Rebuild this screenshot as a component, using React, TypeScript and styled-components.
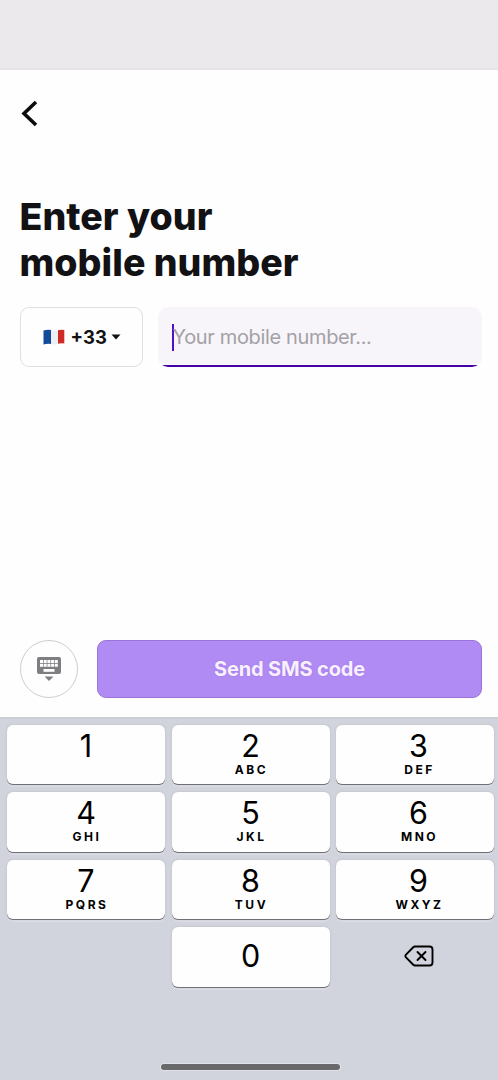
import React from "react";
import styled, { createGlobalStyle } from "styled-components";

const GlobalStyle = createGlobalStyle`
  *, *::before, *::after { box-sizing: border-box; }
  body { margin: 0; background: #fefefe; }
  button, input { font: inherit; color: inherit; margin: 0; padding: 0; }
`;

const Screen = styled.div`
  width: 498px;
  height: 1080px;
  display: flex;
  flex-direction: column;
  overflow: hidden;
  background: #fefefe;
  color: #121114;
  font-family: Inter, "Liberation Sans", sans-serif;
`;

const StatusBar = styled.header`
  flex: none;
  height: 70px;
  background: #ece9ed;
  border-bottom: 2px solid #e6e4e8;
`;

const Content = styled.main`
  flex: none;
  height: 647px;
  padding: 30px 16px 19px 19.5px;
  display: flex;
  flex-direction: column;
`;

const BackButton = styled.button`
  width: 24px;
  height: 28px;
  border: 0;
  background: none;
  svg { display: block; }
`;

const Title = styled.h1`
  margin: 66px 0 0;
  font-size: 37.5px;
  line-height: 46px;
  font-weight: 800;
  letter-spacing: 0.05px;
  white-space: nowrap;
`;

const Fields = styled.div`
  margin-top: 21px;
  display: flex;
  gap: 15px;
`;

const CountryPicker = styled.button`
  width: 123px;
  height: 60px;
  flex: none;
  display: flex;
  align-items: center;
  padding-left: 22px;
  border: 1px solid #e0dfe2;
  border-radius: 9px;
  background: #fefefe;
`;

const DialCode = styled.span`
  margin: 0 4px 0 6px;
  font-size: 18.5px;
  font-weight: 650;
`;

const PhoneField = styled.label`
  flex: 1;
  height: 60px;
  display: flex;
  align-items: center;
  padding-left: 14px;
  border-radius: 10px;
  overflow: hidden;
  background: linear-gradient(#f7f5f9 57px, #fbf9fe 57px, #fbf9fe 58px, #4400a4 58px);
`;

const Caret = styled.span`
  width: 2px;
  height: 27px;
  background: #4e10c8;
`;

const Placeholder = styled.span`
  margin-left: -1px;
  font-size: 20px;
  letter-spacing: -0.35px;
  color: #a3a1a6;
`;

const Actions = styled.div`
  margin-top: auto;
  display: flex;
  gap: 19.5px;
`;

const HideKeyboard = styled.button`
  width: 58px;
  height: 58px;
  flex: none;
  display: grid;
  place-items: center;
  border: 1px solid #cecdd0;
  border-radius: 50%;
  background: #fefefe;
`;

const SendButton = styled.button`
  flex: 1;
  height: 58px;
  border: 1.5px solid #9b74d8;
  border-radius: 9px;
  background: #b18bf4;
  color: #f8efff;
  font-size: 20px;
  font-weight: 700;
  letter-spacing: -0.15px;
  text-shadow: 0 0 2px #9d76df;
`;

const Keyboard = styled.section`
  flex: 1;
  display: flex;
  flex-direction: column;
  justify-content: space-between;
  align-items: center;
  padding: 5.5px 4px 10px 7px;
  background: #d2d4dd;
  border-top: 2px solid #cdced3;
`;

const Keys = styled.div`
  width: 100%;
  display: grid;
  grid-template-columns: repeat(3, 1fr);
  grid-auto-rows: 59.5px;
  gap: 8px 6.5px;
`;

const Key = styled.button<{ $blank?: boolean; $centered?: boolean; $last?: boolean }>`
  display: flex;
  flex-direction: column;
  align-items: center;
  justify-content: ${(p) => (p.$centered ? "center" : "flex-start")};
  padding-top: ${(p) => (p.$centered ? 0 : 3.2)}px;
  padding-bottom: ${(p) => (p.$centered ? 1.5 : 0)}px;
  padding-left: ${(p) => (p.$last ? 7 : 0)}px;
  border: 0;
  border-radius: 6px;
  color: #000;
  background: ${(p) => (p.$blank ? "transparent" : "#fefefe")};
  box-shadow: ${(p) =>
    p.$blank ? "none" : "0 1px 0 #707176, 0 0 2px 1px #c8c9d0, 0 3px 0 #dcdde4"};
`;

const Digit = styled.span`
  font-size: 30.5px;
  line-height: 36px;
`;

const Letters = styled.span`
  margin-right: -2px;
  font-size: 12px;
  line-height: 12.5px;
  font-weight: 700;
  letter-spacing: 2.5px;
`;

const HomeIndicator = styled.div`
  width: 179px;
  height: 6px;
  margin-left: -1px;
  border-radius: 4px;
  background: #69696b;
  box-shadow: 0 0 0 1px #e0e2e7;
`;

const FrenchFlag = () => (
  <svg width="22" height="16" viewBox="0 0 22 16">
    <path d="M.5 1.500Q4.500 .3 8 1V15Q4 14.500 .5 15.500Z" fill="#124b99" />
    <path d="M8 1Q11 2 15 1.200V14.800Q11 16 8 15Z" fill="#edf0f2" />
    <path d="M15 1.200Q18 .2 21.300 1V14.500Q18 14 15 14.800Z" fill="#cf2b24" />
  </svg>
);

const KeyboardIcon = () => (
  <svg width="26" height="26" viewBox="0 0 26 26">
    <rect x="1" y="1" width="24" height="17" rx="2" fill="#7e7d81" />
    {[4, 7.7, 11.4, 15.1, 18.8].map((x) => (
      <g key={x} fill="#fefefe">
        <rect x={x} y="4" width="3" height="3" />
        <rect x={x} y="7.800" width="3" height="3" />
      </g>
    ))}
    <rect x="7.500" y="13" width="11" height="2.800" fill="#fefefe" />
    <path d="M8.500 20.500h9L13 25Z" fill="#7e7d81" />
  </svg>
);

const DeleteIcon = () => (
  <svg width="30" height="22" viewBox="0 0 30 22" fill="none" stroke="#000" strokeWidth="1.900" strokeLinejoin="round" strokeLinecap="round">
    <path d="M11 1.500h14.500q3 0 3 3v13q0 3-3 3H11q-1 0-2-1L2 12.300q-1.200-1.300 0-2.600L9 2.500q1-1 2-1Z" />
    <path d="m13.500 7 8 8M21.500 7l-8 8" />
  </svg>
);

const keys: [string, string][] = [
  ["1", ""],
  ["2", "ABC"],
  ["3", "DEF"],
  ["4", "GHI"],
  ["5", "JKL"],
  ["6", "MNO"],
  ["7", "PQRS"],
  ["8", "TUV"],
  ["9", "WXYZ"],
];

export default function App() {
  return (
    <>
      <GlobalStyle />
      <Screen>
        <StatusBar />
        <Content>
          <BackButton aria-label="Back">
            <svg width="24" height="28" viewBox="0 0 24 28" fill="none" stroke="#0c0b0e" strokeWidth="3.600">
              <path d="M16 2 4 13.500 16 25" />
            </svg>
          </BackButton>
          <Title>
            Enter your
            <br />
            mobile number
          </Title>
          <Fields>
            <CountryPicker>
              <FrenchFlag />
              <DialCode>+33</DialCode>
              <svg width="10" height="6" viewBox="0 0 10 6">
                <path d="M.5.500h9L5 5.500Z" fill="#121114" />
              </svg>
            </CountryPicker>
            <PhoneField>
              <Caret />
              <Placeholder>Your mobile number...</Placeholder>
            </PhoneField>
          </Fields>
          <Actions>
            <HideKeyboard aria-label="Hide keyboard">
              <KeyboardIcon />
            </HideKeyboard>
            <SendButton>Send SMS code</SendButton>
          </Actions>
        </Content>
        <Keyboard>
          <Keys>
            {keys.map(([digit, letters], i) => (
              <Key key={digit} $last={i % 3 === 2}>
                <Digit>{digit}</Digit>
                <Letters>{letters}</Letters>
              </Key>
            ))}
            <span />
            <Key $centered>
              <Digit>0</Digit>
            </Key>
            <Key $blank $centered $last aria-label="Delete">
              <DeleteIcon />
            </Key>
          </Keys>
          <HomeIndicator />
        </Keyboard>
      </Screen>
    </>
  );
}
